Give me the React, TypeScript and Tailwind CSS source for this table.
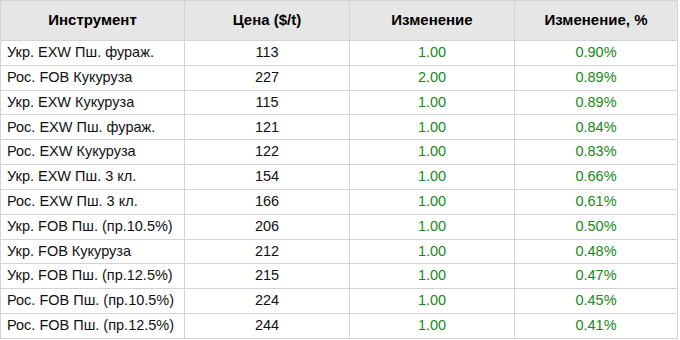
const rows: [string, string, string, string][] = [
  ["Укр. EXW Пш. фураж.", "113", "1.00", "0.90%"],
  ["Рос. FOB Кукуруза", "227", "2.00", "0.89%"],
  ["Укр. EXW Кукуруза", "115", "1.00", "0.89%"],
  ["Рос. EXW Пш. фураж.", "121", "1.00", "0.84%"],
  ["Рос. EXW Кукуруза", "122", "1.00", "0.83%"],
  ["Укр. EXW Пш. 3 кл.", "154", "1.00", "0.66%"],
  ["Рос. EXW Пш. 3 кл.", "166", "1.00", "0.61%"],
  ["Укр. FOB Пш. (пр.10.5%)", "206", "1.00", "0.50%"],
  ["Укр. FOB Кукуруза", "212", "1.00", "0.48%"],
  ["Укр. FOB Пш. (пр.12.5%)", "215", "1.00", "0.47%"],
  ["Рос. FOB Пш. (пр.10.5%)", "224", "1.00", "0.45%"],
  ["Рос. FOB Пш. (пр.12.5%)", "244", "1.00", "0.41%"],
]

const cell = "border-r border-b border-[#d3d3d3] flex items-center"

export default function App() {
  return (
    <div className="w-[680px] h-[340px] bg-white font-['Liberation_Sans',Arial,sans-serif] text-[14.5px] text-[#111]">
      <div className="w-[678px] border-l border-t border-[#d3d3d3] grid grid-cols-[184px_165px_165px_163px]">
        <div className={`${cell} h-[40px] justify-center bg-[#e6e6e6] font-bold text-[15px] text-black`}>Инструмент</div>
        <div className={`${cell} h-[40px] justify-center bg-[#e6e6e6] font-bold text-[15px] text-black`}>Цена ($/t)</div>
        <div className={`${cell} h-[40px] justify-center bg-[#e6e6e6] font-bold text-[15px] text-black`}>Изменение</div>
        <div className={`${cell} h-[40px] justify-center bg-[#e6e6e6] font-bold text-[15px] text-black`}>Изменение, %</div>
        {rows.map(([name, price, chg, pct]) => (
          <>
            <div key={name + "a"} className={`${cell} h-[24.83px] pl-[6px]`}>{name}</div>
            <div key={name + "b"} className={`${cell} h-[24.83px] justify-center`}>{price}</div>
            <div key={name + "c"} className={`${cell} h-[24.83px] justify-center text-[#168a16]`}>{chg}</div>
            <div key={name + "d"} className={`${cell} h-[24.83px] justify-center text-[#168a16]`}>{pct}</div>
          </>
        ))}
      </div>
    </div>
  )
}
